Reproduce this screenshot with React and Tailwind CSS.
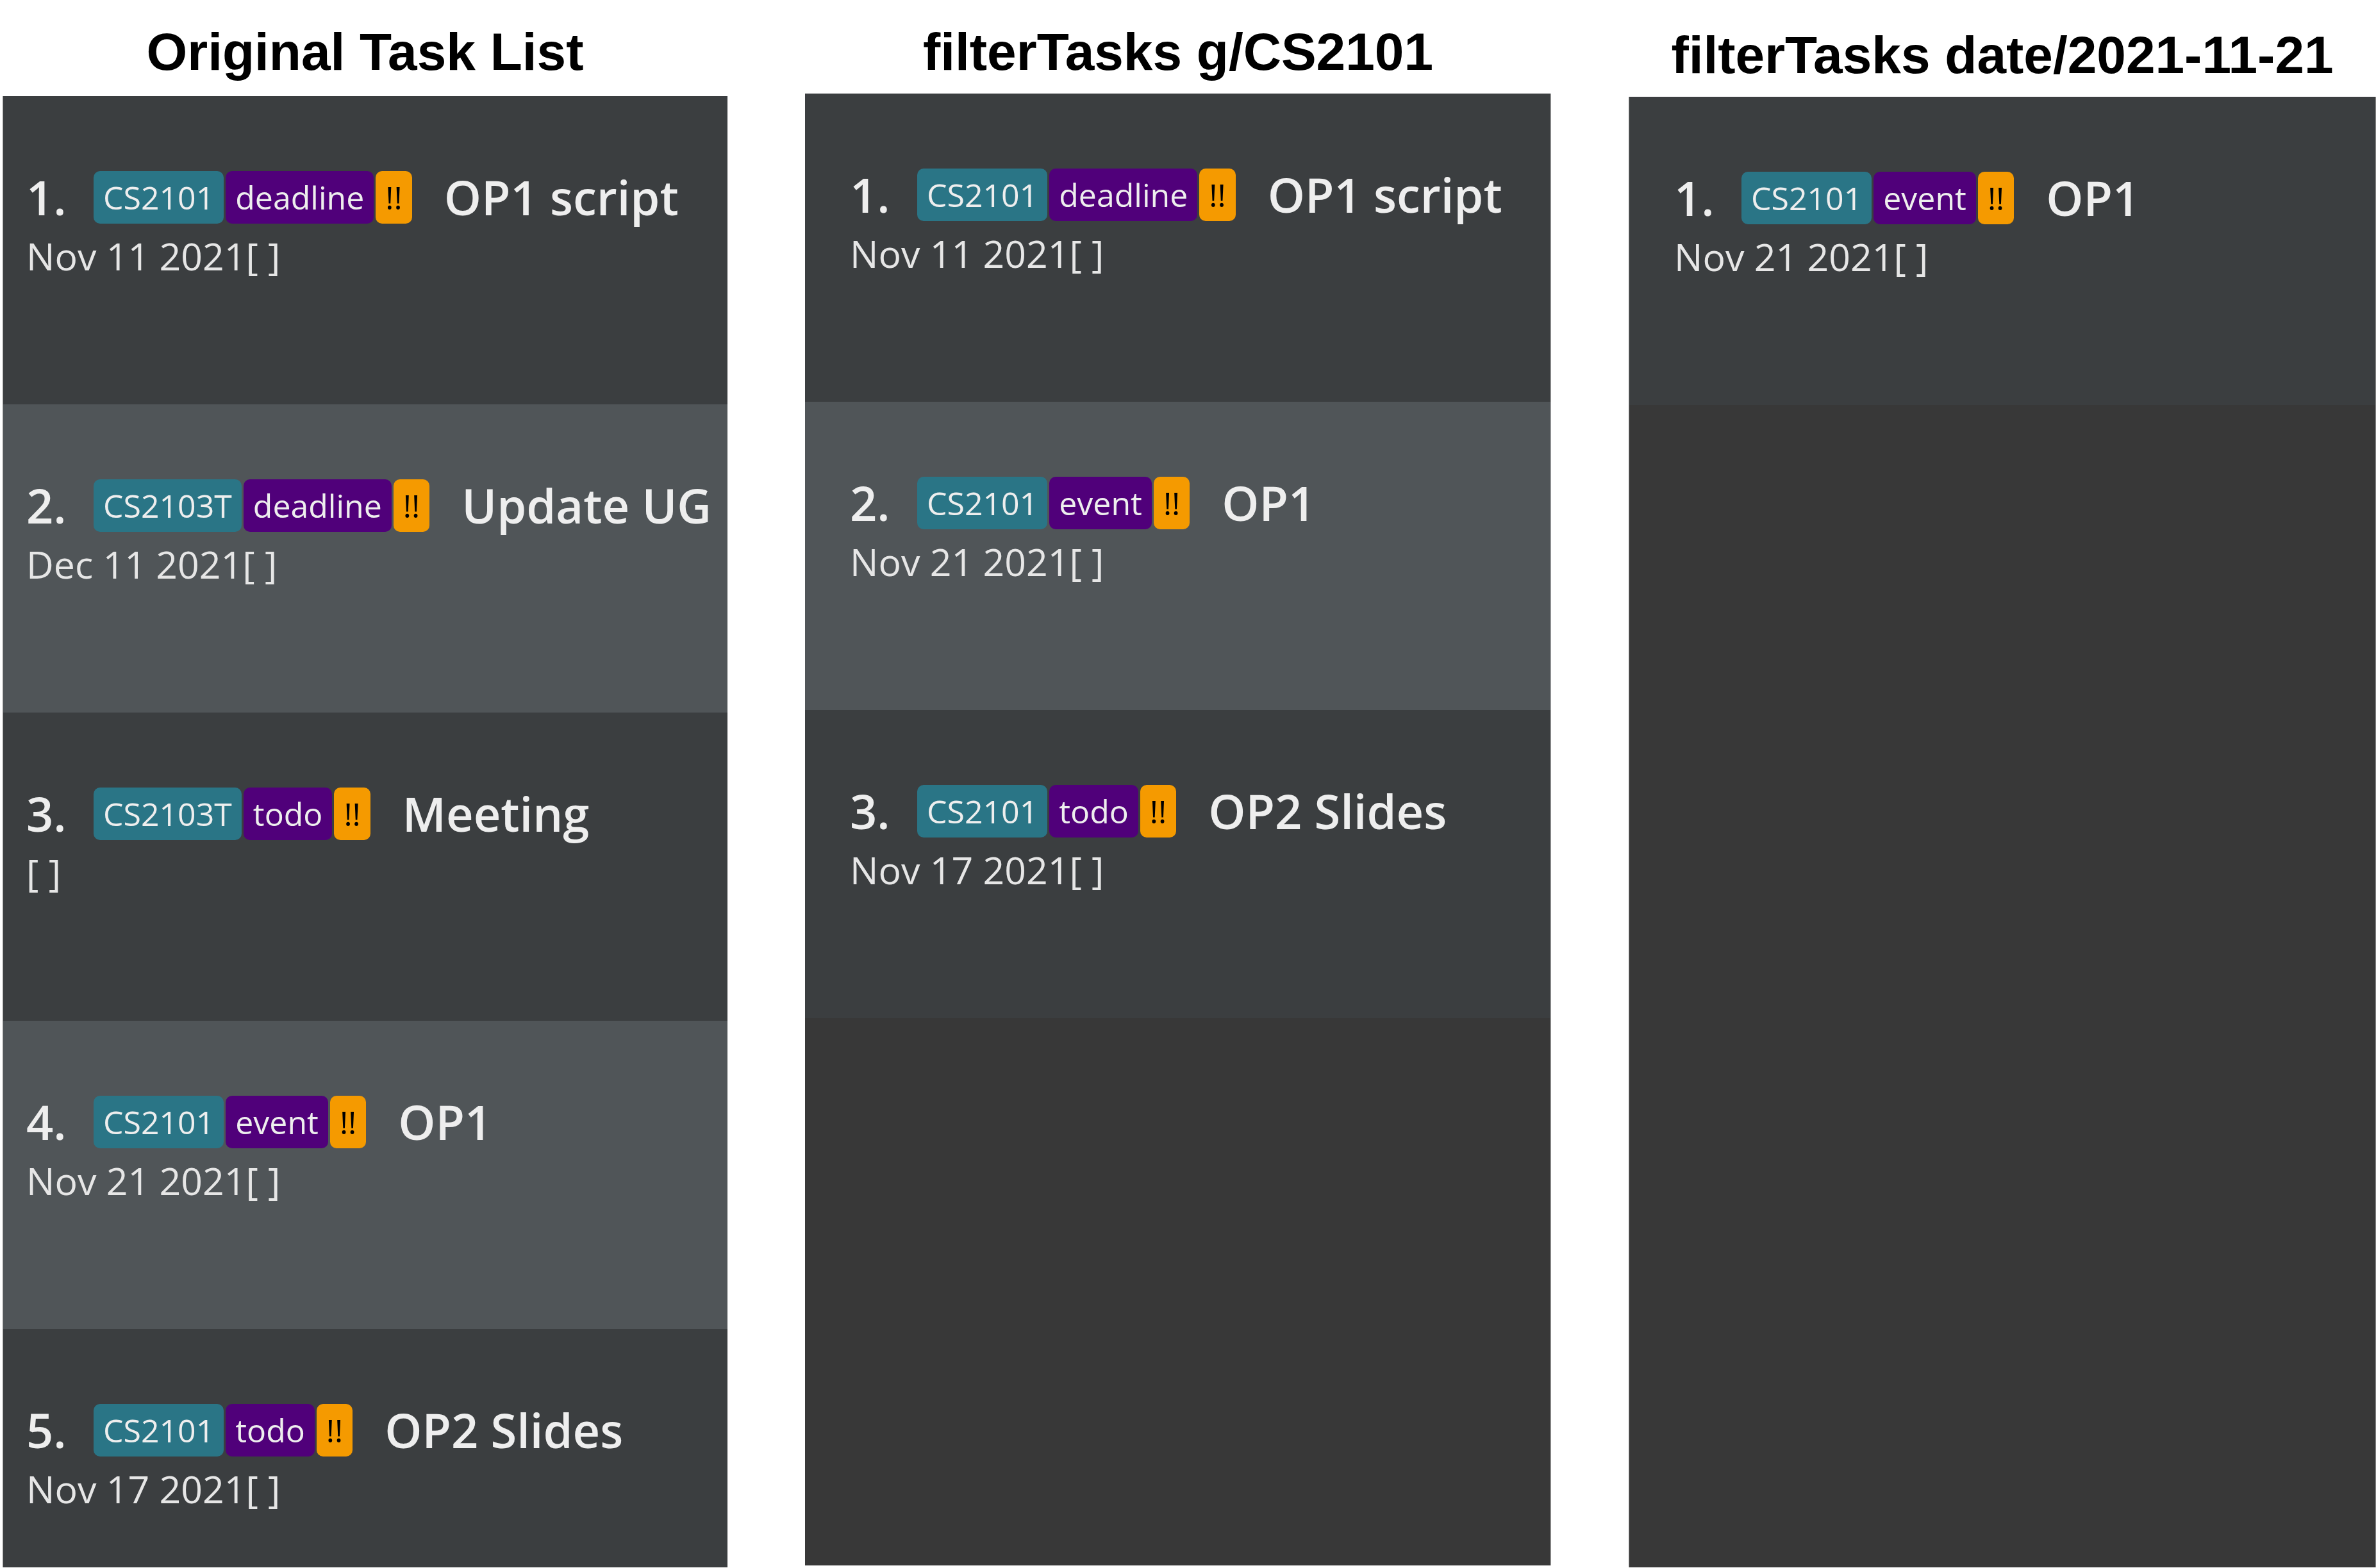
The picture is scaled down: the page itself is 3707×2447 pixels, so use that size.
const ORIGINAL = [
  { no: 1, module: 'CS2101', type: 'deadline', title: 'OP1 script', date: 'Nov 11 2021[ ]' },
  { no: 2, module: 'CS2103T', type: 'deadline', title: 'Update UG', date: 'Dec 11 2021[ ]' },
  { no: 3, module: 'CS2103T', type: 'todo', title: 'Meeting', date: '[ ]' },
  { no: 4, module: 'CS2101', type: 'event', title: 'OP1', date: 'Nov 21 2021[ ]' },
  { no: 5, module: 'CS2101', type: 'todo', title: 'OP2 Slides', date: 'Nov 17 2021[ ]' },
]

const BY_GROUP = [
  { no: 1, module: 'CS2101', type: 'deadline', title: 'OP1 script', date: 'Nov 11 2021[ ]' },
  { no: 2, module: 'CS2101', type: 'event', title: 'OP1', date: 'Nov 21 2021[ ]' },
  { no: 3, module: 'CS2101', type: 'todo', title: 'OP2 Slides', date: 'Nov 17 2021[ ]' },
]

const BY_DATE = [
  { no: 1, module: 'CS2101', type: 'event', title: 'OP1', date: 'Nov 21 2021[ ]' },
]

function Tag({ className, children }) {
  return (
    <span className={`flex h-[82px] items-center rounded-[10px] px-[15px] text-[50px] font-medium leading-none ${className}`}>
      {children}
    </span>
  )
}

function TaskRow({ task, light, inset }) {
  return (
    <div className={`h-[481px] shrink-0 pt-[117px] ${inset} ${light ? 'bg-[#505558]' : 'bg-[#3b3e40]'}`}>
      <div className="flex h-[82px] items-center">
        <span className="w-[105px] text-[74px] font-semibold leading-none text-[#eeeeee]">{task.no}.</span>
        <div className="flex gap-[3px]">
          <Tag className="bg-[#2a7586] text-[#eeeeee]">{task.module}</Tag>
          <Tag className="bg-[#50007a] text-[#eeeeee]">{task.type}</Tag>
          <Tag className="bg-[#f59a00] text-black">!!</Tag>
        </div>
        <span className="ml-[50px] whitespace-nowrap text-[74px] font-semibold leading-none text-[#eeeeee]">
          {task.title}
        </span>
      </div>
      <div className="mt-[21px] whitespace-pre text-[59px] leading-none text-[#e6e6e6]">{task.date}</div>
    </div>
  )
}

function Column({ heading, tasks, width, inset, headTop, gap, height, border }) {
  return (
    <div className={`flex shrink-0 flex-col ${width}`}>
      <h1
        className={`whitespace-nowrap text-center font-['Liberation_Sans',Arial,sans-serif] text-[82px] font-bold leading-none text-black ${headTop}`}
      >
        {heading}
      </h1>
      <div className={`flex flex-col overflow-hidden bg-[#383838] font-['Open_Sans',sans-serif] ${gap} ${height} ${border}`}>
        {tasks.map((t, i) => (
          <TaskRow key={t.no} task={t} light={i % 2 === 1} inset={inset} />
        ))}
      </div>
    </div>
  )
}

export default function App() {
  return (
    <div className="flex h-[2447px] w-[3707px] gap-[121px] overflow-hidden bg-white pl-[4px]">
      <Column
        heading="Original Task List"
        tasks={ORIGINAL}
        width="w-[1131px]"
        inset="pl-[36px]"
        headTop="pt-[40px]"
        gap="mt-[28px]"
        height="h-[2296px]"
        border="border-l border-[#8a8a8a]"
      />
      <Column
        heading="filterTasks g/CS2101"
        tasks={BY_GROUP}
        width="w-[1164px]"
        inset="pl-[70px]"
        headTop="pt-[40px]"
        gap="mt-[24px]"
        height="h-[2297px]"
        border="border-r border-[#b5b5b5]"
      />
      <Column
        heading="filterTasks date/2021-11-21"
        tasks={BY_DATE}
        width="w-[1166px]"
        inset="pl-[70px]"
        headTop="pt-[45px]"
        gap="mt-[24px]"
        height="h-[2295px]"
        border="border-x border-[#8a8a8a]"
      />
    </div>
  )
}
